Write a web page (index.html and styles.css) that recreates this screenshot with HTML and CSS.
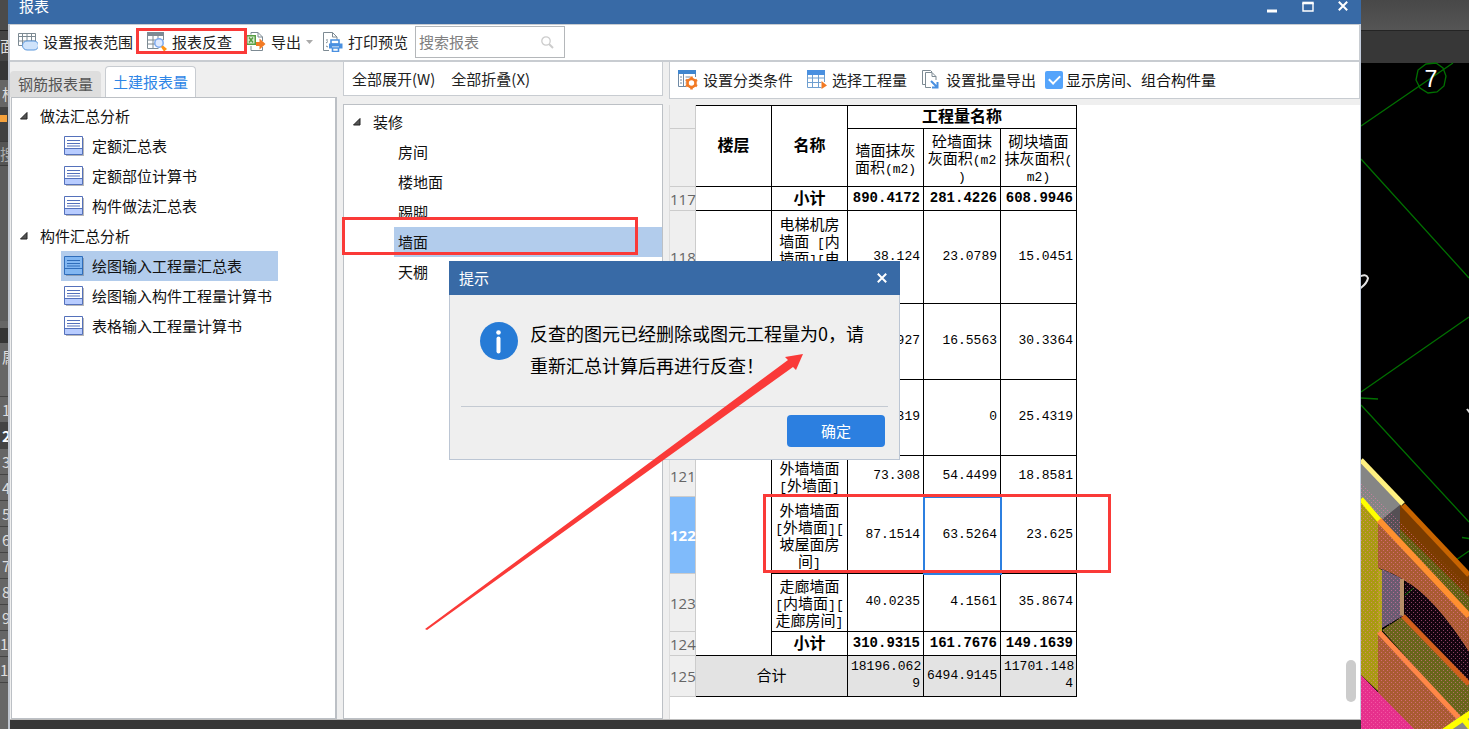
FILE: index.html
```html
<!DOCTYPE html>
<html lang="zh-CN">
<head>
<meta charset="utf-8">
<title>报表</title>
<link rel="stylesheet" href="styles.css">
</head>
<body>
<svg class="defs" aria-hidden="true">
  <symbol id="sheet" viewBox="0 0 20 20">
    <path d="M2 2h18v18H2z" fill="#b9b9b9"/>
    <path d="M.5.5h18v18H.5z" fill="#fff" stroke="#5571bb"/>
    <path d="M1 13h17v5H1z" fill="#b8ccff"/>
    <path d="M.5 12.5h18M3 4.5h13M3 7.5h13M3 10h13" stroke="#5571bb" fill="none"/>
  </symbol>
  <symbol id="sheet-on" viewBox="0 0 20 20">
    <path d="M2 2h18v18H2z" fill="#8d9fb5"/>
    <path d="M.5.5h18v18H.5z" fill="#82b7f2" stroke="#2f6dbb"/>
    <path d="M.5 12.5h18M3 4.5h13M3 7.5h13M3 10h13" stroke="#2f6dbb" fill="none"/>
  </symbol>
  <symbol id="tri" viewBox="0 0 8 8"><path d="M7 .5V7H.5z" fill="#555" stroke="#222"/></symbol>
  <symbol id="cross" viewBox="0 0 10 10"><path d="M.8.8l8.4 8.4M9.2.8L.8 9.2" stroke="#fff" stroke-width="2" fill="none"/></symbol>
</svg>

<div class="app">
  <aside class="dock">
    <div class="d-top"></div>
    <div class="d-field">面</div>
    <div class="d-gap"></div>
    <div class="d-tab">构</div>
    <div class="d-tool"><i></i></div>
    <div class="d-search">搜</div>
    <div class="d-tree"></div>
    <div class="d-split"></div>
    <div class="d-head">属</div>
    <div class="d-row">1</div><div class="d-row on">2</div><div class="d-row">3</div><div class="d-row">4</div>
    <div class="d-row">5</div><div class="d-row">6</div><div class="d-row">7</div><div class="d-row">8</div>
    <div class="d-row">9</div><div class="d-row two">10</div><div class="d-row two">11</div>
    <div class="d-rest"></div>
  </aside>

  <main class="window">
    <header class="titlebar">
      <h1>报表</h1>
      <div class="wbtns">
        <button aria-label="最小化"><svg width="12" height="12" viewBox="0 0 12 12"><path d="M1 10h10" stroke="#fff" stroke-width="3"/></svg></button>
        <button aria-label="最大化"><svg width="12" height="12" viewBox="0 0 12 12"><path d="M1 2v8h10V2" fill="none" stroke="#fff" stroke-width="1.4"/><path d="M.3 2h11.4" stroke="#fff" stroke-width="2.6"/></svg></button>
        <button aria-label="关闭"><svg width="10" height="10"><use href="#cross"/></svg></button>
      </div>
    </header>

    <div class="toolbar">
      <button class="tool"><svg width="20" height="20" viewBox="0 0 20 20"><path d="M.5 1.5h17v12H.5zM.5 4.5h17M.5 9h17M4.5 1.5v12M9 1.5v12M13.500 1.500v12" fill="none" stroke="#7d8a93"/><path d="M9 9h7a4 4 0 0 1 0 9H9a4.500 4.500 0 0 1 0-9z" fill="#cfe3fb" stroke="#5a97dc"/></svg>设置报表范围</button>
      <button class="tool"><svg width="20" height="20" viewBox="0 0 20 20"><path d="M.5 3v13.500h11M.5 8h16M.5 12h8M6 4v12M11 4v4M16.500 4v4" fill="none" stroke="#7d8a93"/><path d="M0 0h17v4H0z" fill="#7d8a93"/><circle cx="12" cy="11" r="4.200" fill="#dfeaff" stroke="#7ca9ee" stroke-width="1.500"/><path d="M14 15l2-1.500 4 3.500-3 2.500z" fill="#ff9415"/></svg>报表反查</button>
      <button class="tool"><svg width="20" height="20" viewBox="0 0 20 20"><path d="M5 2.500V.5h7l4.500 4.500v4M5 14v4.500h11.500V15M12 .5V5h4.500" fill="none" stroke="#7d8a93"/><path d="M0 3h10v10H0z" fill="#579d43"/><path d="M1.500 4.500h7v7h-7z" fill="#dcecd5"/><path d="M3 5.500l4 5M7 5.500l-4 5" stroke="#579d43" stroke-width="1.500"/><path d="M10 10h3.500V6.500L19.500 12l-6 5.500V14H10z" fill="#f27a24"/></svg>导出<svg class="caret" width="7" height="4" viewBox="0 0 7 4"><path d="M0 0h7L3.500 4z" fill="#aaa"/></svg></button>
      <button class="tool"><svg width="20" height="20" viewBox="0 0 20 20"><path d="M6 18.500H.5V.5h9L14 5v3M9.500.5V5H14M3 8h2M3 11l2-1.500M3 14l2 1" fill="none" stroke="#7d8a93"/><path d="M8 8h8v4H8zM9.500 16h6v3.500h-6z" fill="#fff" stroke="#4a90e0" stroke-width="1.600"/><path d="M6 11.500h13.500v5h-3.500v-2H9v2H6z" fill="#4a90e0"/></svg>打印预览</button>
      <label class="search"><input type="text" placeholder="搜索报表" aria-label="搜索报表"><svg width="13" height="13" viewBox="0 0 13 13"><circle cx="5" cy="5" r="4.200" fill="none" stroke="#ccc" stroke-width="1.300"/><path d="M8 8l4 4" stroke="#ccc" stroke-width="2"/></svg></label>
    </div>

    <div class="content">
      <section class="reports">
        <div class="tabs"><button class="tab">钢筋报表量</button><button class="tab active">土建报表量</button></div>
        <ul class="panel tree">
          <li class="group"><svg width="8" height="8"><use href="#tri"/></svg>做法汇总分析</li>
          <li class="leaf"><svg width="20" height="20"><use href="#sheet"/></svg>定额汇总表</li>
          <li class="leaf"><svg width="20" height="20"><use href="#sheet"/></svg>定额部位计算书</li>
          <li class="leaf"><svg width="20" height="20"><use href="#sheet"/></svg>构件做法汇总表</li>
          <li class="group"><svg width="8" height="8"><use href="#tri"/></svg>构件汇总分析</li>
          <li class="leaf selected"><svg width="20" height="20"><use href="#sheet-on"/></svg>绘图输入工程量汇总表</li>
          <li class="leaf"><svg width="20" height="20"><use href="#sheet"/></svg>绘图输入构件工程量计算书</li>
          <li class="leaf"><svg width="20" height="20"><use href="#sheet"/></svg>表格输入工程量计算书</li>
        </ul>
      </section>

      <section class="elements">
        <div class="bar"><button class="tool">全部展开(W)</button><button class="tool">全部折叠(X)</button></div>
        <ul class="panel tree">
          <li class="group"><svg width="8" height="8"><use href="#tri"/></svg>装修</li>
          <li class="item">房间</li>
          <li class="item">楼地面</li>
          <li class="item">踢脚</li>
          <li class="item selected">墙面</li>
          <li class="item">天棚</li>
        </ul>
      </section>

      <section class="report">
        <div class="bar">
          <button class="tool"><svg width="20" height="20" viewBox="0 0 20 20"><path d="M.5 2v14.500H8M17.500 3v4M5.500 4v12M2 7h2M2 10h2M2 13h2M7.500 7H12M7.500 10H10M7.500 13H9" fill="none" stroke="#6f8aa5"/><path d="M0 0h18v4H0z" fill="#3f86cf"/><circle cx="13.500" cy="13" r="4" fill="#fff" stroke="#f27a24" stroke-width="2.600"/><path d="M13.500 6.500v2M13.500 17.500v2M8 9.800l1.700 1M17.300 15.200l1.700 1M8 16.200l1.700-1M17.300 10.800l1.700-1" stroke="#f27a24" stroke-width="2.600"/></svg>设置分类条件</button>
          <button class="tool"><svg width="20" height="20" viewBox="0 0 20 20"><path d="M.5 3v14.500h14M.5 8h17M.5 12.500h14M5.500 4v13M11.500 4v13M17.500 4v8" fill="none" stroke="#6f9fd0"/><path d="M0 0h18v5H0z" fill="#4a90e0"/><path d="M14.500 11l5.500 4.500-5.500 3.500z" fill="#f27a24"/></svg>选择工程量</button>
          <button class="tool"><svg width="20" height="20" viewBox="0 0 20 20"><path d="M4 14.500H1.500V.5h8L11 2" fill="none" stroke="#7d8a93"/><path d="M10 17.500H4.500v-15h6.500l4 4V10M11 2.500v4h4" fill="none" stroke="#7d8a93"/><path d="M10 11l6 6M16.500 12v5.500H11" fill="none" stroke="#4a90e0" stroke-width="2"/></svg>设置批量导出</button>
          <label class="check"><input type="checkbox" checked>显示房间、组合构件量</label>
        </div>
        <div class="sheet">
          <table>
            <colgroup><col class="c-idx"><col class="c-76"><col class="c-76"><col class="c-76"><col class="c-77"><col class="c-76"></colgroup>
            <tr class="h24"><th class="idx"></th><th rowspan="2" class="top">楼层</th><th rowspan="2" class="top">名称</th><th colspan="3" class="top">工程量名称</th></tr>
            <tr class="h58"><th class="idx"></th><td class="name">墙面抹灰<br>面积<span>(m2)</span></td><td class="name">砼墙面抹<br>灰面积<span>(m2<br>)</span></td><td class="name">砌块墙面<br>抹灰面积<span>(<br>m2)</span></td></tr>
            <tr class="h24 sum"><th class="idx">117</th><td></td><th>小计</th><td>890.4172</td><td>281.4226</td><td>608.9946</td></tr>
            <tr class="h94"><th class="idx">118</th><td rowspan="7"></td><td class="name">电梯机房<br>墙面<span> [</span>内<br>墙面<span>][</span>电<br>梯机房<br><span>]</span></td><td>38.124</td><td>23.0789</td><td>15.0451</td></tr>
            <tr class="h76"><th class="idx">119</th><td class="name"></td><td>46.8927</td><td>16.5563</td><td>30.3364</td></tr>
            <tr class="h76"><th class="idx">120</th><td class="name"></td><td>25.4319</td><td>0</td><td>25.4319</td></tr>
            <tr class="h41"><th class="idx">121</th><td class="name">外墙墙面<br><span>[</span>外墙面<span>]</span></td><td>73.308</td><td>54.4499</td><td>18.8581</td></tr>
            <tr class="h77"><th class="idx current">122</th><td class="name">外墙墙面<br><span>[</span>外墙面<span>][</span><br>坡屋面房<br>间<span>]</span></td><td>87.1514</td><td class="cell-on">63.5264</td><td>23.625</td></tr>
            <tr class="h58"><th class="idx">123</th><td class="name">走廊墙面<br><span>[</span>内墙面<span>][</span><br>走廊房间<span>]</span></td><td>40.0235</td><td>4.1561</td><td>35.8674</td></tr>
            <tr class="h24 sum"><th class="idx">124</th><th>小计</th><td>310.9315</td><td>161.7676</td><td>149.1639</td></tr>
            <tr class="h41 total"><th class="idx">125</th><td colspan="2" class="name">合计</td><td>18196.062<br>9</td><td>6494.9145</td><td>11701.148<br>4</td></tr>
          </table>
          <div class="thumb"></div>
        </div>
      </section>
    </div>
    <footer class="status"></footer>

    <div class="dialog" role="dialog" aria-labelledby="dlg-title">
      <div class="dlg-head"><h2 id="dlg-title">提示</h2><button aria-label="关闭提示"><svg width="10" height="10"><use href="#cross"/></svg></button></div>
      <div class="dlg-body">
        <svg width="38" height="38" viewBox="0 0 38 38"><circle cx="19" cy="19" r="19" fill="#267bd6"/><circle cx="18.500" cy="10.500" r="2.300" fill="#fff"/><path d="M18.500 16.500v13" stroke="#fff" stroke-width="4" stroke-linecap="round"/></svg>
        <p>反查的图元已经删除或图元工程量为0，请<br>重新汇总计算后再进行反查！</p>
      </div>
      <div class="dlg-foot"><button>确定</button></div>
    </div>
  </main>

  <aside class="canvas">
    <svg width="108" height="729" viewBox="0 0 108 729">
      <defs>
        <pattern id="dots" width="4" height="4" patternUnits="userSpaceOnUse"><path d="M0 0h1v1H0zM2 2h1v1H2z" fill="#ff7ab8"/></pattern>
        <linearGradient id="ribbon" x2="0" y2="1"><stop stop-color="#484848"/><stop offset="1" stop-color="#555"/></linearGradient>
      </defs>
      <path d="M0 0h108v729H0z" fill="#000"/>
      <path d="M0 0h108v30H0z" fill="url(#ribbon)"/><path d="M0 30h108v33H0z" fill="#373737"/><path d="M0 30.500h108" stroke="#242424"/>
      <g fill="none" stroke="#007000" stroke-width="1.300">
        <path d="M0 126L92 63M0 159L108 278M0 392L108 317M0 398l17 1M0 405L108 522M101 537.500l7 1M95 560l13-9"/>
        <path d="M65 64l10-1 7 5 3 8-2 10-7 6-9 1-8-5-4-8 2-10z"/>
      </g>
      <text x="70" y="87" class="axis">7</text>
      <path d="M-2 277Q5 273 7 278 6 284-2 289" fill="none" stroke="#e4e4e4" stroke-width="2"/>
      <path d="M106 409l3 4" stroke="#ddd" stroke-width="2"/>
      <path d="M0 460L41 504 20 521 0 499z" fill="#858585"/>
      <path d="M39 503L108 574V600L39 530z" fill="#7b3c00"/>
      <path d="M39 529L108 597V618L37 541z" fill="#626012"/>
      <path d="M20 520L39 505V541z" fill="#555055"/>
      <path d="M0 501L18 520V692L0 675z" fill="#a99a12"/>
      <path d="M17 568l4 2v62l-4 2z" fill="#b3a518"/>
      <path d="M17 520L108 615V652Q72 596 44 581 31 572 17 568z" fill="#a85b32"/>
      <path d="M21 569L40 578V617L21 628z" fill="#6a5b70"/>
      <path d="M44 581Q72 596 108 652V685L43 617z" fill="#14050f"/>
      <path d="M44 595l9-7" stroke="#007000"/>
      <path d="M21 630L41 617 108 684V712L99 718z" fill="#68651a"/>
      <path d="M17 632L98 718 82 729H52L17 693z" fill="#a85b32"/>
      <path d="M0 675L53 729H0z" fill="#e6308c"/>
      <path d="M0 482L39 520 108 588V729H0z" fill="url(#dots)" opacity=".5"/>
      <path d="M39 579h4v38l-4-2z" fill="#b79068"/>
      <path d="M0 460L42 504" stroke="#fff080" stroke-width="5"/>
      <path d="M42 505L108 575" stroke="#c86400" stroke-width="5"/>
      <path d="M0 499L19 521" stroke="#ffff00" stroke-width="5"/>
      <path d="M18 520L108 616" stroke="#ff9030" stroke-width="6"/>
      <path d="M42 616L108 684" stroke="#d2601c" stroke-width="5"/>
      <path d="M18 632L98 718" stroke="#ff8748" stroke-width="5"/>
      <path d="M98 717l10-1v13H82z" fill="#888"/>
      <path d="M82 732L110 713M101 717l9 11" stroke="#ffff00" stroke-width="6"/>
    </svg>
  </aside>

  <svg class="marks" aria-hidden="true">
    <g fill="none" stroke="#fa3a38" stroke-width="3">
      <rect x="137.500" y="29.500" width="108" height="23"/>
      <rect x="343.500" y="218.500" width="293" height="35"/>
      <rect x="764.500" y="495.500" width="345" height="76"/>
    </g>
    <path d="M425 629L788 360 785 357 803 354 796 370 793 367 427 630z" fill="#fa3a38"/>
  </svg>
</div>
</body>
</html>
```
FILE: styles.css
```css
* { box-sizing: border-box; }
body {
  margin: 0;
  background: #373737;
  color: #111;
  font: 15px/20px "Noto Sans CJK SC", "Noto Sans", sans-serif;
}
button { border: 0; padding: 0; background: none; color: inherit; font: inherit; }
h1, h2, p, ul { margin: 0; padding: 0; font: inherit; }
li { list-style: none; }
svg { flex: none; display: block; }
.defs { position: absolute; width: 0; height: 0; }
.app { position: relative; display: flex; height: 100vh; overflow: hidden; }

/* edge of the host application, left of the window */
.dock { display: flex; flex-direction: column; flex: none; width: 8px; overflow: hidden; background: #666; color: #ddd; }
.dock div { flex: none; overflow: hidden; white-space: nowrap; }
.dock .d-top { height: 31px; background: #4b4b4b; border-bottom: 1px solid #222; }
.dock .d-field { height: 30px; padding-top: 5px; background: #444; }
.dock .d-gap { height: 19px; background: #363636; }
.dock .d-tab { height: 27px; padding: 4px 0 0 2px; background: #666; }
.dock .d-tool { height: 34px; padding-top: 8px; background: #414141; }
.d-tool i { display: block; width: 7px; height: 7px; background: #f5a13c; }
.dock .d-search { height: 25px; padding-top: 2px; background: #555; border: solid #3b3b3b; border-width: 1px 0; color: #aaa; }
.dock .d-tree { height: 155px; background: #5c5c5c; }
.dock .d-split { height: 22px; background: #353535; border-top: 7px solid #666; }
.dock .d-head { height: 54px; padding: 4px 0 0 2px; border-bottom: 1px solid #444; }
.dock .d-row { height: 26px; padding: 3px 0 0 2px; border-bottom: 1px solid #444; }
.dock .d-row.two { padding-left: 0; }
.dock .d-row.on { background: #444; color: #fff; font-weight: bold; }
.dock .d-rest { flex: 1; }

.window { position: relative; display: flex; flex: 1; flex-direction: column; min-width: 0; background: #efefef; border-left: 2px solid #bfc5cf; border-right: 1px solid #c4cede; }
.titlebar { display: flex; justify-content: space-between; flex: none; height: 24px; margin: 0 -1px 0 -2px; padding: 0 13px 0 11px; background: #386aa6; color: #fff; }
.titlebar h1 { line-height: 12px; }
.wbtns { display: flex; align-items: flex-start; gap: 24px; padding-top: 1px; }
.toolbar { display: flex; align-items: center; flex: none; gap: 14px; height: 38px; padding: 0 8px 1px; background: #fff; border: solid #c8ccd1; border-width: 1px 1px 2px 0; }
.tool { display: flex; align-items: center; gap: 5px; color: #222; white-space: nowrap; }
.toolbar .tool:nth-child(3) { margin-right: -4px; }
.toolbar .tool:nth-child(4) { margin-right: -7px; }
.search { display: flex; align-items: center; width: 150px; height: 32px; padding: 0 10px 0 3px; background: #fff; border: 1px solid #b4b7ba; }
.search input { flex: 1; min-width: 0; padding: 0; border: 0; outline: 0; background: none; font: inherit; }
.search input::placeholder { color: #808080; opacity: 1; }

.content { display: flex; flex: 1; gap: 6px; min-height: 0; }
.reports, .elements, .report { display: flex; flex-direction: column; min-width: 0; }
.reports { flex: none; width: 327px; padding-top: 4px; }
.elements { flex: none; width: 320px; gap: 8px; }
.report { flex: 1; gap: 6px; }
.panel { flex: 1; background: #fff; border: solid #bcc0c5; border-width: 1px; }
.bar { display: flex; align-items: center; flex: none; gap: 14px; height: 34px; padding: 0 8px; background: #fff; border: 1px solid #c8ccd1; border-top: 0; }
.elements .bar { gap: 16px; }
.report .bar { height: 37px; }

.tabs { display: flex; align-items: flex-end; flex: none; gap: 4px; height: 31px; }
.tab { width: 91px; height: 26px; background: #dedede; border-radius: 4px 4px 0 0; color: #555; }
.tab.active { height: 31px; background: #fff; border: 1px solid #c8ccd1; border-bottom: 0; color: #2e86e6; }
.reports .panel { margin-left: 1px; border-width: 1px 2px 1px 1px; }
.tree { padding-top: 3px; }
.tree li { display: flex; align-items: center; height: 30px; white-space: nowrap; color: #111; }
.reports .group { gap: 12px; padding-left: 8px; }
.reports .leaf { gap: 8px; width: 217px; margin-left: 49px; padding-left: 3px; }
.elements .tree { padding-top: 2px; }
.elements .group { gap: 12px; padding-left: 9px; }
.elements .item { margin-left: 50px; padding-left: 4px; }
.tree li.selected { background: #b2ccec; }

.check { display: flex; align-items: center; gap: 3px; margin-left: -5px; white-space: nowrap; }
.check input { display: grid; place-items: center; width: 18px; height: 18px; margin: 0; appearance: none; background: #55a4fb; border-radius: 2px; }
.check input:checked::after { content: ""; width: 5px; height: 9px; margin-top: -3px; border: solid #fff; border-width: 0 2px 2px 0; transform: rotate(45deg); }

.sheet { position: relative; flex: 1; min-height: 0; background: #fff; border-left: 1px solid #ddd; }
.thumb { position: absolute; right: 4px; bottom: 17px; width: 10px; height: 42px; border-radius: 5px; background: #ccc; }
table { width: 407px; table-layout: fixed; border-collapse: separate; border-spacing: 0; }
.c-idx { width: 26px; }
.c-76 { width: 76px; }
.c-77 { width: 77px; }
td, th { padding: 0 3px; border: solid #000; border-width: 0 1px 1px 0; color: #000; }
td { padding-bottom: 2px; font: 13px/17px "Liberation Mono", monospace; text-align: right; }
th { padding-bottom: 4px; font: bold 16px/18px "Noto Sans CJK SC", sans-serif; text-align: center; }
td.name { padding: 0; font: 15px/17px "Noto Sans CJK SC", sans-serif; text-align: center; white-space: nowrap; }
.name span { font: 13px/1px "Liberation Mono", monospace; white-space: pre; }
.top { border-top-width: 1px; }
.sum td { padding-bottom: 0; font-size: 14px; font-weight: bold; }
.total td { background: #e3e3e3; }
.total td.name { padding-bottom: 4px; }
th.idx { padding: 0; background: #efefef; border-color: #ccc; color: #666; font: 15px/20px "Open Sans", sans-serif; }
th.current { background: #80bbfb; color: #fff; font-weight: bold; }
td.cell-on { outline: 2px solid #2c7fe0; outline-offset: -1px; }
.h24 { height: 24px; } .h41 { height: 41px; } .h58 { height: 58px; }
.h76 { height: 76px; } .h77 { height: 77px; } .h94 { height: 93px; }
.status { flex: none; height: 10px; margin: 0 -1px 0 0; background: #373737; border-top: 1px solid #bbb; }

.dialog { position: absolute; left: 439px; top: 261px; width: 451px; background: #efefef; border: solid #bcc6d4; border-width: 0 1px 1px; }
.dlg-head { display: flex; align-items: center; justify-content: space-between; height: 34px; margin: 0 -1px; padding: 0 13px 0 10px; background: #386aa6; color: #fff; }
.dlg-body { display: flex; gap: 12px; height: 112px; margin: 0 11px; padding: 22px 0 0 19px; border-bottom: 1px solid #c4cad2; }
.dlg-body svg { margin-top: 5px; }
.dlg-body p { color: #000; font-size: 18px; line-height: 32px; white-space: nowrap; }
.dlg-foot { display: flex; justify-content: flex-end; padding: 8px 14px 12px; }
.dlg-foot button { width: 98px; height: 32px; border-radius: 4px; background: #2c7fe0; color: #fff; }

.canvas { flex: none; width: 108px; background: #000; }
.axis { fill: #fff; font: 23px "Liberation Sans", sans-serif; text-anchor: middle; }
.marks { position: absolute; inset: 0; width: 100%; height: 100%; pointer-events: none; }
```
